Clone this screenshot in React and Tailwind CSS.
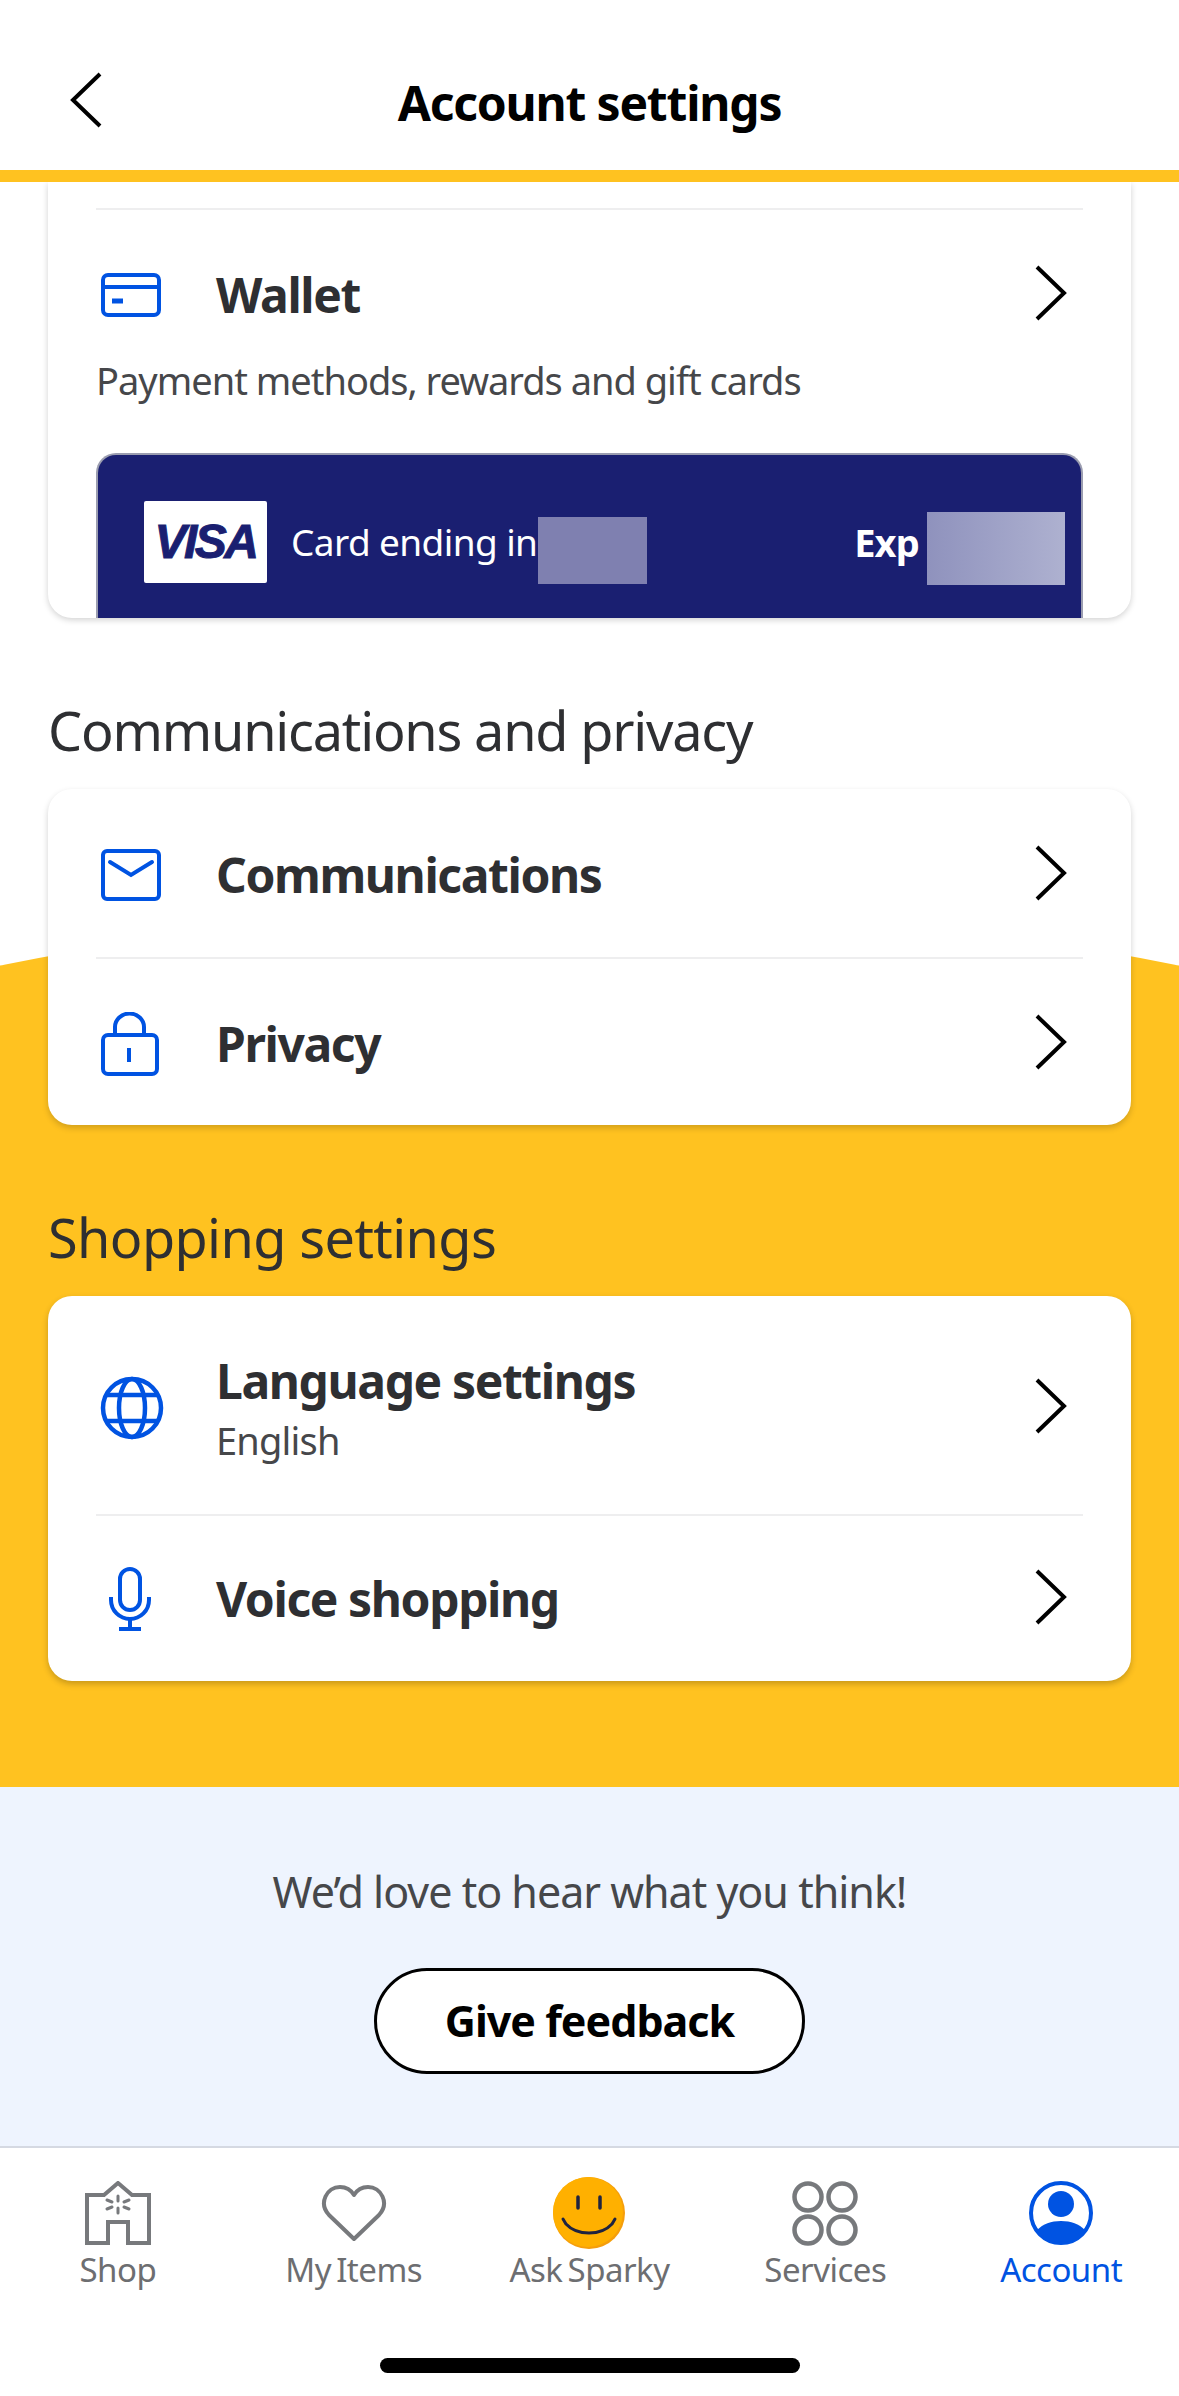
import React from "react";

const font = "font-['Noto_Sans','Open_Sans',sans-serif]";

function Chevron() {
  return (
    <svg width="36" height="56" viewBox="0 0 36 56" fill="none" className="shrink-0">
      <path d="M4 2 L31 28 L4 54" stroke="#000" strokeWidth="4" />
    </svg>
  );
}

function CardIcon() {
  return (
    <svg width="62" height="46" viewBox="0 0 62 46" fill="none" stroke="#0053e2" strokeWidth="4">
      <rect x="3" y="3" width="56" height="40" rx="5" />
      <path d="M3 15 H59" />
      <path d="M12 29 H23" strokeWidth="5" />
    </svg>
  );
}

function MailIcon() {
  return (
    <svg width="62" height="54" viewBox="0 0 62 54" fill="none" stroke="#0053e2" strokeWidth="4">
      <rect x="3" y="3" width="56" height="48" rx="4" />
      <path d="M10 14 L31 27 L52 14" strokeLinecap="round" />
    </svg>
  );
}

function LockIcon() {
  return (
    <svg width="60" height="64" viewBox="0 0 60 64" fill="none" stroke="#0053e2" strokeWidth="4">
      <rect x="3" y="23" width="54" height="39" rx="5" />
      <path d="M15 23 V15 a14 13 0 0 1 29 0 V23" />
      <path d="M29 36 V50" />
    </svg>
  );
}

function GlobeIcon() {
  return (
    <svg width="64" height="64" viewBox="0 0 64 64" fill="none" stroke="#0053e2" strokeWidth="4.5">
      <circle cx="32" cy="32" r="29" />
      <ellipse cx="32" cy="32" rx="13" ry="29" />
      <path d="M7 19 H57 M7 45 H57" />
    </svg>
  );
}

function MicIcon() {
  return (
    <svg width="42" height="64" viewBox="0 0 42 64" fill="none" stroke="#0053e2" strokeWidth="4" className="ml-[9px]">
      <rect x="11" y="2" width="20" height="41" rx="10" />
      <path d="M2 30 V33 a19 19 0 0 0 38 0 V30" />
      <path d="M21 52 V61 M10 62 H32" />
    </svg>
  );
}

function ShopIcon() {
  return (
    <svg width="66" height="64" viewBox="0 0 66 64" fill="none" stroke="#77797c" strokeWidth="4">
      <path d="M2 14 H19 L33 2 L47 14 H64 V62 H43 V41 H23 V62 H2 Z" />
      <g strokeWidth="3" strokeLinecap="round">
        <path d="M33 15 V20 M33 27 V32 M22 19 L27 21 M39 26 L44 28 M22 28 L27 26 M39 21 L44 19" />
      </g>
    </svg>
  );
}

function HeartIcon() {
  return (
    <svg width="66" height="58" viewBox="0 0 66 58" fill="none" stroke="#77797c" strokeWidth="4">
      <path d="M33 55 L8 31 C-3 19 6 3 19 3 C26 3 30 6 33 11 C36 6 40 3 47 3 C60 3 69 19 58 31 Z" strokeLinejoin="round" />
    </svg>
  );
}

function SmileyIcon() {
  return (
    <svg width="72" height="72" viewBox="0 0 72 72" fill="none">
      <circle cx="36" cy="36" r="36" fill="#f59e0b" />
      <circle cx="35" cy="35" r="35" fill="#ffb000" />
      <path d="M25 20 V31 M47 20 V31" stroke="#1f2340" strokeWidth="3.5" strokeLinecap="round" />
      <path d="M10 42 L13 47 C24 59 48 59 59 47 L62 42" stroke="#1f2340" strokeWidth="3" strokeLinecap="round" />
    </svg>
  );
}

function ServicesIcon() {
  return (
    <svg width="66" height="66" viewBox="0 0 66 66" fill="none" stroke="#77797c" strokeWidth="4.5">
      <circle cx="16" cy="17" r="13.5" />
      <circle cx="50" cy="17" r="13.5" />
      <circle cx="16" cy="50" r="13.5" />
      <circle cx="50" cy="50" r="13.5" />
    </svg>
  );
}

function AccountIcon() {
  return (
    <svg width="64" height="66" viewBox="0 0 64 66">
      <circle cx="32" cy="33" r="30" fill="none" stroke="#0053e2" strokeWidth="4" />
      <circle cx="32" cy="24" r="13" fill="#0053e2" />
      <path d="M8 50 C14 44 22 41 32 41 C42 41 50 44 56 50 A30 30 0 0 1 8 50 Z" fill="#0053e2" />
    </svg>
  );
}

function Row({ icon, title, sub, height }) {
  return (
    <div className={`flex items-center ${height}`}>
      <div className="w-[120px] shrink-0 pl-[4px]">{icon}</div>
      <div className="flex-1">
        <div className="text-[48px] leading-[58px] font-bold tracking-[-1.4px] text-[#2e2f32]">{title}</div>
        {sub && <div className="text-[38px] leading-[50px] tracking-[-0.8px] text-[#46474a] mt-[5px]">{sub}</div>}
      </div>
      <div className="pr-[14px] -mt-[4px]">
        <Chevron />
      </div>
    </div>
  );
}

const navItems = [
  { label: "Shop", icon: <ShopIcon /> },
  { label: "My Items", icon: <HeartIcon /> },
  { label: "Ask Sparky", icon: <SmileyIcon /> },
  { label: "Services", icon: <ServicesIcon /> },
  { label: "Account", icon: <AccountIcon />, active: true },
];

export default function App() {
  return (
    <div className={`w-[1179px] h-[2396px] overflow-hidden bg-white flex flex-col ${font}`}>
      {/* HEADER */}
      <div className="relative h-[170px] shrink-0 flex items-center justify-center pt-[36px]">
        <svg width="36" height="56" viewBox="0 0 36 56" fill="none" className="absolute left-[68px] top-[72px]">
          <path d="M32 2 L5 28 L32 54" stroke="#000" strokeWidth="4" />
        </svg>
        <h1 className="text-[48px] leading-[60px] font-bold tracking-[-1.2px] text-black">Account settings</h1>
      </div>
      <div className="h-[12px] shrink-0 bg-[#ffc220]" />

      {/* SCROLL AREA */}
      <div className="flex-1 overflow-hidden">
        <div className="px-[48px]">
          <div className="bg-white rounded-b-[24px] shadow-[0_2px_6px_rgba(0,0,0,0.18)] h-[436px] px-[48px] pt-[26px] overflow-hidden">
            <div className="h-[2px] bg-[#eeeeef]" />
            <div className="mt-[55px]">
              <Row icon={<CardIcon />} title="Wallet" height="h-[60px]" />
            </div>
            <div className="mt-[30px] text-[38px] leading-[50px] tracking-[-1px] text-[#46474a]">
              Payment methods, rewards and gift cards
            </div>
            <div className="mt-[48px] h-[165px] rounded-t-[20px] bg-[#1a1f71] border-t-2 border-x-2 border-[#9b9db0] flex items-start pl-[46px] pr-[16px] pt-[46px]">
              <div className="w-[123px] h-[82px] bg-white rounded-[2px] flex items-center justify-center">
                <span className="font-['Liberation_Sans',sans-serif] italic font-bold text-[48px] leading-none tracking-[-2.5px] text-[#1a1f71] [-webkit-text-stroke:1px_#1a1f71]">
                  VISA
                </span>
              </div>
              <span className="ml-[24px] mt-[16px] text-[37px] leading-[50px] tracking-[-0.6px] text-white">Card ending in</span>
              <div className="ml-[1px] mt-[16px] w-[109px] h-[67px] bg-[#7f80b0]" />
              <span className="ml-auto mt-[16px] text-[38px] leading-[50px] font-bold tracking-[-0.8px] text-white">Exp</span>
              <div className="ml-[8px] mt-[11px] w-[138px] h-[73px] bg-linear-to-r from-[#8f92bd] to-[#aeb1d0]" />
            </div>
          </div>

          <h2 className="mt-[77px] text-[54px] leading-[70px] tracking-[-1.2px] text-[#2e2f32]">Communications and privacy</h2>
          <div className="relative z-10 mt-[24px] -mb-[218px] bg-white rounded-[24px] shadow-[0_3px_6px_rgba(0,0,0,0.18)] px-[48px]">
            <Row icon={<MailIcon />} title="Communications" height="h-[168px] pt-[4px]" />
            <div className="h-[2px] bg-[#eeeeef]" />
            <Row icon={<LockIcon />} title="Privacy" height="h-[166px] pt-[3px]" />
          </div>
        </div>

        {/* YELLOW SECTION */}
        <div className="bg-[#ffc220] [clip-path:circle(3000px_at_50%_3000px)] pt-[218px] pb-[106px] px-[48px]">
          <h2 className="mt-[77px] text-[54px] leading-[70px] tracking-[-0.6px] text-[#2e2f32]">Shopping settings</h2>
          <div className="mt-[24px] bg-white rounded-[24px] shadow-[0_3px_6px_rgba(0,0,0,0.22)] px-[48px]">
            <Row icon={<GlobeIcon />} title="Language settings" sub="English" height="h-[218px] pt-[6px]" />
            <div className="h-[2px] bg-[#eeeeef]" />
            <Row icon={<MicIcon />} title="Voice shopping" height="h-[165px]" />
          </div>
        </div>

        {/* FEEDBACK */}
        <div className="h-[359px] bg-[#eef4fe] flex flex-col items-center pt-[75px]">
          <p className="text-[43px] leading-[60px] tracking-[-1px] text-[#46474a]">We’d love to hear what you think!</p>
          <button className="mt-[46px] w-[431px] h-[106px] rounded-full bg-white border-[3px] border-black text-[43px] font-bold tracking-[-1px] text-black">
            Give feedback
          </button>
        </div>
      </div>

      {/* BOTTOM NAV */}
      <div className="h-[250px] shrink-0 bg-white border-t-2 border-[#d5d9e2] pt-[32px]">
        <div className="grid grid-cols-5">
          {navItems.map((item) => (
            <div key={item.label} className="flex flex-col items-center">
              <div className="h-[66px] flex items-center justify-center">{item.icon}</div>
              <div className={`mt-[4px] text-[33px] leading-[40px] tracking-[-0.5px] [word-spacing:-3px] ${item.active ? "text-[#0053e2]" : "text-[#6d6e71]"}`}>
                {item.label}
              </div>
            </div>
          ))}
        </div>
        <div className="mt-[68px] mx-auto w-[420px] h-[15px] rounded-full bg-black" />
      </div>
    </div>
  );
}
